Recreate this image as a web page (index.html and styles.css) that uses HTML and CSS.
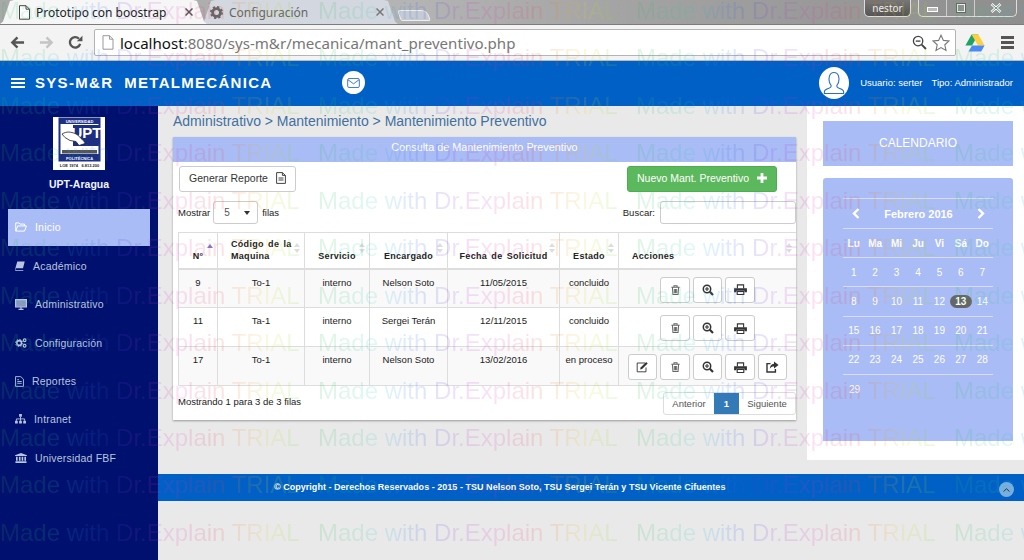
FILE: index.html
```html
<!DOCTYPE html>
<html lang="es">
<head>
    <meta charset="UTF-8">
    <title>Prototipo con boostrap</title>
    <link rel="stylesheet" href="styles.css">
</head>
<body>
    <svg class="sprites" width="0" height="0">
        <symbol id="i-trash" viewBox="0 0 12 12">
            <path d="M1.5 3h9M4.3 3V1.4h3.4V3M2.6 3l.6 8h5.6l.6-8M4.7 5v4.6M6 5v4.6M7.3 5v4.6" fill="none" stroke="currentColor" stroke-width="1.1"/>
        </symbol>
        <symbol id="i-zoom" viewBox="0 0 12 12">
            <circle cx="5" cy="5" r="3.7" fill="none" stroke="currentColor" stroke-width="1.5"/>
            <path d="M7.8 7.8l3.2 3.2" stroke="currentColor" stroke-width="2.2"/>
            <path d="M3 5h4M5 3v4" stroke="currentColor" stroke-width="1.1"/>
        </symbol>
        <symbol id="i-print" viewBox="0 0 14 12">
            <path d="M3.6 5V1h6.800v4" fill="none" stroke="currentColor" stroke-width="1.2"/>
            <path d="M0 4.600h14v4.400h-2.600V7.400H2.600V9H0z" fill="currentColor"/>
            <path d="M3.400 8.200h7.200v3.200H3.400z" fill="none" stroke="currentColor" stroke-width="1.200"/>
        </symbol>
        <symbol id="i-edit" viewBox="0 0 13 12">
            <path d="M9 2H1.200v8.800H10V6.500" fill="none" stroke="currentColor" stroke-width=".9"/>
            <path d="M4.600 6.600L10.200 1l1.500 1.500-5.600 5.600-2 .4z" fill="currentColor"/>
        </symbol>
        <symbol id="i-share" viewBox="0 0 13 12">
            <path d="M4.500 2.600H1v8.400h8.400V8" fill="none" stroke="currentColor" stroke-width="1.400"/>
            <path d="M8 .6L12.600 4 8 7.400V5.400C6 5.400 4.800 6 3.800 7.800 3.900 5 5.400 3 8 2.700z" fill="currentColor"/>
        </symbol>
    </svg>

    <div class="browser">
        <div class="tabstrip">
            <div class="tab tab-active">
                <svg class="tab-icon" viewBox="0 0 12 15"><path d="M1 .7h6.500L11 4.200v10H1zM7.500 .7v3.500H11" fill="#fff" stroke="#444" stroke-width="1"/></svg>
                <span class="tab-title">Prototipo con boostrap</span>
                <svg class="tab-close" viewBox="0 0 8 8"><path d="M.5 .5l7 7M7.500 .5l-7 7" stroke="#555" stroke-width="1.500"/></svg>
            </div>
            <div class="tab tab-other">
                <svg class="tab-icon" viewBox="0 0 14 14"><circle cx="7" cy="7" r="4.200" fill="none" stroke="#666" stroke-width="3"/><circle cx="7" cy="7" r="6" fill="none" stroke="#666" stroke-width="2" stroke-dasharray="2.400 2.300"/></svg>
                <span class="tab-title">Configuración</span>
                <svg class="tab-close" viewBox="0 0 8 8"><path d="M.5 .5l7 7M7.500 .5l-7 7" stroke="#777" stroke-width="1.500"/></svg>
            </div>
            <div class="tab-new"></div>
            <div class="window-user">nestor</div>
            <div class="window-buttons">
                <span class="win-btn"><i class="win-min"></i></span>
                <span class="win-btn"><i class="win-max"></i></span>
                <span class="win-btn win-close">
                    <svg viewBox="0 0 12 10" width="12" height="10"><path d="M1.500 1l9 8M10.500 1l-9 8" stroke="#fff" stroke-width="2.600"/><path d="M1.500 1l9 8M10.500 1l-9 8" stroke="#555" stroke-width=".7"/></svg>
                </span>
            </div>
        </div>
        <div class="toolbar">
            <svg class="nav-btn" viewBox="0 0 16 14"><path d="M15 7H3M8 1.500L2.500 7 8 12.500" fill="none" stroke="#555" stroke-width="2.600"/></svg>
            <svg class="nav-btn" viewBox="0 0 16 14"><path d="M1 7h12M8 1.500L13.500 7 8 12.500" fill="none" stroke="#c4c4c4" stroke-width="2.600"/></svg>
            <svg class="nav-btn" viewBox="0 0 16 16"><path d="M13 9.500A5.600 5.600 0 1 1 11.700 4" fill="none" stroke="#555" stroke-width="2.500"/><path d="M9.400 6.600h6V.8z" fill="#555"/></svg>
            <div class="omnibox">
                <svg class="omni-page" viewBox="0 0 12 15"><path d="M1 .7h6.500L11 4.200v10H1zM7.500 .7v3.500H11" fill="#fff" stroke="#999" stroke-width="1"/></svg>
                <span class="url"><b>localhost</b>:8080/sys-m&amp;r/mecanica/mant_preventivo.php</span>
                <svg class="omni-zoom" viewBox="0 0 16 16"><circle cx="6.500" cy="6.500" r="5" fill="none" stroke="#444" stroke-width="1.400"/><path d="M4 6.500h5" stroke="#444" stroke-width="1.400"/><path d="M10.300 10.300l4.600 4.600" stroke="#444" stroke-width="2"/></svg>
                <svg class="omni-star" viewBox="0 0 18 18"><path d="M9 1.200l2.400 5.200 5.600.6-4.200 3.800 1.200 5.600L9 13.600l-5 2.800 1.200-5.600L1 7l5.600-.6z" fill="#fff" stroke="#777" stroke-width="1.100"/></svg>
            </div>
            <svg class="drive" viewBox="0 0 20 18"><path d="M6.600 .5h6.800L7 11.600H.4z" fill="#1ea362"/><path d="M6.600 .5h6.800l6.200 11H13z" fill="#ffcf3f"/><path d="M3.600 17.500L7 11.600h12.600l-3.300 5.900z" fill="#4a8af4"/></svg>
            <div class="chrome-menu"><i></i><i></i><i></i></div>
        </div>
    </div>

    <header class="navbar">
        <div class="burger"><i></i><i></i><i></i></div>
        <div class="brand">SYS-M&amp;R&nbsp; METALMECÁNICA</div>
        <span class="mail">
            <svg viewBox="0 0 14 11" width="13" height="10"><rect x=".6" y=".6" width="12.800" height="9.800" rx="1.400" fill="none" stroke="#2a6fbf" stroke-width="1"/><path d="M1 2l6 4.400L13 2" fill="none" stroke="#2a6fbf" stroke-width="1"/></svg>
        </span>
        <div class="user">
            <span class="avatar">
                <svg viewBox="0 0 24 26" width="22" height="24"><path d="M1.500 24.500v-2c0-2 2-2.700 5-3.700 1.700-.6 2.500-1.200 2.500-2.400 0-1-1.500-2.400-2-4.400C6 8 6.500 1.500 12 1.500S18 8 17 12c-.5 2-2 3.400-2 4.400 0 1.200.8 1.800 2.500 2.400 3 1 5 1.700 5 3.700v2z" fill="none" stroke="#2a6fbf" stroke-width="1.200"/></svg>
            </span>
            <span>Usuario: serter</span>
            <span>Tipo: Administrador</span>
        </div>
    </header>

    <div class="layout">
        <nav class="sidebar">
            <div class="logo">
                <svg viewBox="0 0 52 53" width="52" height="53">
                    <rect width="52" height="53" fill="#fff"/>
                    <path d="M6.500 1.500h40v42h-40z" fill="#fff" stroke="#1c2f80" stroke-width="2"/>
                    <rect x="6.500" y="1.500" width="40" height="5.500" fill="#1c2f80"/>
                    <text x="26.500" y="6" class="logo-small" fill="#fff">UNIVERSIDAD</text>
                    <rect x="20" y="8" width="26" height="21" fill="#1c2f80"/>
                    <text x="33.500" y="21" class="logo-upt" fill="#fff">UPT</text>
                    <path d="M9 17c5-3 9-2 13-.5 3 1 4 3 6 5 2 2 4 3 4 5l-6 2-3-4-6-1-5-3z" fill="#fff" stroke="#222" stroke-width=".8"/>
                    <rect x="9" y="33" width="35" height="3.500" fill="#555"/>
                    <rect x="6.500" y="37" width="40" height="6.500" fill="#1c2f80"/>
                    <text x="26.500" y="42.500" class="logo-small" fill="#fff">POLITÉCNICA</text>
                    <text x="26.500" y="49.500" class="logo-small" fill="#222">LOE 1974 &#160; 6.813.200</text>
                </svg>
            </div>
            <div class="campus">UPT-Aragua</div>
            <a class="menu-item active" href="#">
                <svg width="12" height="10" viewBox="0 0 13 11"><path d="M.7 10V1h3.600l1 1.300h5v2M.7 10l2.200-5.700h9.600L10.300 10z" fill="none" stroke="currentColor" stroke-width="1.100"/></svg>
                Inicio
            </a>
            <a class="menu-item" href="#">
                <svg width="10" height="10" viewBox="0 0 11 11"><path d="M2.500 .5h8.200l-1.900 7.400H1.200L.4 9.200c0 .6.600.9 1.200.9h7.700l-.3.9H1.500C.6 11 0 10.200 .1 9z" fill="currentColor"/></svg>
                Académico
            </a>
            <a class="menu-item" href="#">
                <svg width="12" height="11" viewBox="0 0 12 11"><path d="M.6 .6h10.800v7.200H.6z" fill="none" stroke="currentColor" stroke-width="1.200"/><rect x="1" y="1" width="10" height="6.500" fill="currentColor" opacity=".75"/><path d="M3.500 10.400h5M6 8v2" stroke="currentColor" stroke-width="1.200"/></svg>
                Administrativo
            </a>
            <a class="menu-item" href="#">
                <svg width="12" height="10" viewBox="0 0 13 11"><circle cx="4.500" cy="5.500" r="2.600" fill="none" stroke="currentColor" stroke-width="1.700"/><circle cx="4.500" cy="5.500" r="4" fill="none" stroke="currentColor" stroke-width="1" stroke-dasharray="1.500 1.600"/><circle cx="10.500" cy="2.500" r="1.500" fill="none" stroke="currentColor" stroke-width="1.200"/><circle cx="10.500" cy="8.500" r="1.500" fill="none" stroke="currentColor" stroke-width="1.200"/></svg>
                Configuración
            </a>
            <a class="menu-item" href="#">
                <svg width="9" height="11" viewBox="0 0 10 12"><path d="M.6 .6h5.800L9.400 3.400v8H.6zM2.500 6h5M2.500 8h5M2.500 4h2" fill="none" stroke="currentColor" stroke-width="1"/></svg>
                Reportes
            </a>
            <a class="menu-item" href="#">
                <svg width="11" height="10" viewBox="0 0 12 11"><path d="M4.500 0h3v3h-3zM0 7.500h3v3H0zM4.500 7.500h3v3h-3zM9 7.500h3v3H9z" fill="currentColor"/><path d="M6 3v4.500M1.500 7.500V5.400h9v2.100" fill="none" stroke="currentColor" stroke-width="1"/></svg>
                Intranet
            </a>
            <a class="menu-item" href="#">
                <svg width="12" height="10" viewBox="0 0 13 11"><path d="M6.500 0L13 2.600v.8H0v-.8zM1 4.200h1.800v4.400H1zM4.200 4.200H6v4.400H4.200zM7.200 4.200H9v4.400H7.200zM10.200 4.200H12v4.400h-1.800zM.4 9.200h12.200V11H.4z" fill="currentColor"/></svg>
                Universidad FBF
            </a>
        </nav>

        <div class="content">
            <div class="content-top">
                <main class="main">
                    <div class="breadcrumb">Administrativo &gt; Mantenimiento &gt; Mantenimiento Preventivo</div>
                    <section class="card">
                        <div class="card-title">Consulta de Mantenimiento Preventivo</div>
                        <div class="card-actions">
                            <a class="btn btn-report" href="#">
                                Generar Reporte
                                <svg width="10" height="12" viewBox="0 0 10 12"><path d="M.6 .6h5.800L9.400 3.400v8H.6zM6.400 .6v2.800h3M2.500 6h5M2.500 8h5" fill="none" stroke="#444" stroke-width="1"/></svg>
                            </a>
                            <a class="btn btn-new" href="#">
                                Nuevo Mant. Preventivo
                                <svg width="10" height="10" viewBox="0 0 10 10"><path d="M5 0v10M0 5h10" stroke="#fff" stroke-width="2.800"/></svg>
                            </a>
                        </div>
                        <div class="table-tools">
                            <label class="length">
                                Mostrar
                                <span class="select">5<i></i></span>
                                filas
                            </label>
                            <label class="search">
                                Buscar:
                                <span class="search-input"></span>
                            </label>
                        </div>
                        <table class="grid">
                            <thead>
                                <tr>
                                    <th class="sort-asc">N°</th>
                                    <th>Código de la Maquina</th>
                                    <th>Servicio</th>
                                    <th>Encargado</th>
                                    <th>Fecha de Solicitud</th>
                                    <th>Estado</th>
                                    <th>Acciones</th>
                                </tr>
                            </thead>
                            <tbody>
                                <tr>
                                    <td>9</td><td>To-1</td><td>interno</td><td>Nelson Soto</td><td>11/05/2015</td><td>concluido</td>
                                    <td>
                                        <div class="actions">
                                            <button class="icon-btn icon-soft"><svg width="11" height="12"><use href="#i-trash"/></svg></button>
                                            <button class="icon-btn"><svg width="12" height="12"><use href="#i-zoom"/></svg></button>
                                            <button class="icon-btn"><svg width="13" height="11"><use href="#i-print"/></svg></button>
                                        </div>
                                    </td>
                                </tr>
                                <tr>
                                    <td>11</td><td>Ta-1</td><td>interno</td><td>Sergei Terán</td><td>12/11/2015</td><td>concluido</td>
                                    <td>
                                        <div class="actions">
                                            <button class="icon-btn icon-soft"><svg width="11" height="12"><use href="#i-trash"/></svg></button>
                                            <button class="icon-btn"><svg width="12" height="12"><use href="#i-zoom"/></svg></button>
                                            <button class="icon-btn"><svg width="13" height="11"><use href="#i-print"/></svg></button>
                                        </div>
                                    </td>
                                </tr>
                                <tr>
                                    <td>17</td><td>To-1</td><td>interno</td><td>Nelson Soto</td><td>13/02/2016</td><td>en proceso</td>
                                    <td>
                                        <div class="actions">
                                            <button class="icon-btn"><svg width="13" height="12"><use href="#i-edit"/></svg></button>
                                            <button class="icon-btn icon-soft"><svg width="11" height="12"><use href="#i-trash"/></svg></button>
                                            <button class="icon-btn"><svg width="12" height="12"><use href="#i-zoom"/></svg></button>
                                            <button class="icon-btn"><svg width="13" height="11"><use href="#i-print"/></svg></button>
                                            <button class="icon-btn"><svg width="13" height="12"><use href="#i-share"/></svg></button>
                                        </div>
                                    </td>
                                </tr>
                            </tbody>
                        </table>
                        <div class="table-foot">
                            <span class="info">Mostrando 1 para 3 de 3 filas</span>
                            <div class="pager">
                                <a href="#">Anterior</a>
                                <a class="current" href="#">1</a>
                                <a href="#">Siguiente</a>
                            </div>
                        </div>
                    </section>
                </main>

                <aside class="aside">
                    <div class="cal-title">CALENDARIO</div>
                    <div class="calendar">
                        <div class="cal-head">
                            <svg width="8" height="11" viewBox="0 0 8 11"><path d="M6.500 1L2 5.500 6.500 10" fill="none" stroke="#fff" stroke-width="2.400"/></svg>
                            <span>Febrero 2016</span>
                            <svg width="8" height="11" viewBox="0 0 8 11"><path d="M1.500 1L6 5.500 1.500 10" fill="none" stroke="#fff" stroke-width="2.400"/></svg>
                        </div>
                        <div class="cal-row cal-days"><span>Lu</span><span>Ma</span><span>Mi</span><span>Ju</span><span>Vi</span><span>Sá</span><span>Do</span></div>
                        <div class="cal-row"><span>1</span><span>2</span><span>3</span><span>4</span><span>5</span><span>6</span><span>7</span></div>
                        <div class="cal-row"><span>8</span><span>9</span><span>10</span><span>11</span><span>12</span><span class="today">13</span><span>14</span></div>
                        <div class="cal-row"><span>15</span><span>16</span><span>17</span><span>18</span><span>19</span><span>20</span><span>21</span></div>
                        <div class="cal-row"><span>22</span><span>23</span><span>24</span><span>25</span><span>26</span><span>27</span><span>28</span></div>
                        <div class="cal-row cal-last"><span>29</span></div>
                    </div>
                </aside>
            </div>

            <footer class="footer">
                © Copyright - Derechos Reservados - 2015 - TSU Nelson Soto, TSU Sergei Terán y TSU Vicente Cifuentes
                <span class="to-top">
                    <svg width="7" height="4" viewBox="0 0 7 4"><path d="M.5 3.500l3-2.700 3 2.700" fill="none" stroke="#234" stroke-width="1"/></svg>
                </span>
            </footer>
        </div>
    </div>

    <div class="watermark" id="watermark" aria-hidden="true"></div>
    <script src="watermark.js"></script>
</body>
</html>
```
FILE: styles.css
```css
* {
    box-sizing: border-box;
}

body {
    margin: 0;
    width: 1024px;
    height: 560px;
    overflow: hidden;
    position: relative;
    display: flex;
    flex-direction: column;
    background-color: #e9e9e9;
    font-family: "Liberation Sans", Arial, sans-serif;
    font-size: 10px;
    color: #222;
}

a {
    text-decoration: none;
    color: inherit;
}

.sprites {
    position: absolute;
}

/* browser window */
.browser {
    height: 61px;
    flex: none;
}

.tabstrip {
    height: 25px;
    display: flex;
    align-items: flex-end;
    background: linear-gradient(90deg, #a8a8a8, #b4b4b4 40%, #a4a4a4 60%, #8e8e8e);
    border-bottom: 1px solid #7c7c7c;
    font-family: "Noto Sans", sans-serif;
    font-size: 12px;
}

.tab {
    height: 24px;
    display: flex;
    align-items: center;
    position: relative;
}

.tab-active {
    width: 207px;
    padding: 0 14px 0 18px;
    background-color: #f6f6f6;
    clip-path: polygon(0 100%, 3px 90%, 10px 4%, 14px 0, 193px 0, 197px 4%, 204px 90%, 207px 100%);
    z-index: 2;
}

.tab-other {
    width: 197px;
    margin-left: -6px;
    padding: 0 14px 0 9px;
    background-color: #d3d7df;
    color: #666;
    clip-path: polygon(0 100%, 3px 90%, 10px 4%, 14px 0, 183px 0, 187px 4%, 194px 90%, 197px 100%);
}

.tab-icon {
    width: 13px;
    height: 15px;
    margin-right: 5px;
}

.tab-other .tab-icon {
    margin-right: 6px;
}

.tab-title {
    flex: 1;
    white-space: nowrap;
}

.tab-close {
    width: 8px;
    height: 8px;
}

.tab-new {
    width: 30px;
    height: 11px;
    margin: 0 0 3px 1px;
    background-color: #c6cad2;
    border: 1px solid #eee;
    border-radius: 3px 6px 2px 2px;
    transform: skewX(18deg);
}

.window-user {
    margin: 0 7px 7px auto;
    width: 47px;
    height: 17px;
    align-self: flex-start;
    border: 1px solid #ddd;
    border-top: none;
    border-radius: 0 0 5px 5px;
    background: linear-gradient(#777, #555);
    color: #eee;
    font-size: 10px;
    line-height: 16px;
    text-align: center;
}

.window-buttons {
    display: flex;
    align-self: flex-start;
    margin-right: 7px;
    height: 17px;
    border: 1px solid #ddd;
    border-top: none;
    border-radius: 0 0 5px 5px;
}

.win-btn {
    width: 28px;
    display: flex;
    align-items: center;
    justify-content: center;
    border-right: 1px solid #ccc;
}

.win-close {
    width: 41px;
    border-right: none;
}

.win-min {
    width: 11px;
    height: 5px;
    margin-top: 3px;
    background-color: #bbb;
    border: 1px solid #fff;
}

.win-max {
    width: 10px;
    height: 10px;
    border: 2px solid #eee;
    outline: 1px solid #666;
    outline-offset: -1px;
}

.toolbar {
    height: 36px;
    display: flex;
    align-items: center;
    padding: 0 10px;
    background-color: #f3f3f3;
    border-bottom: 1px solid #bbb;
}

.nav-btn {
    width: 15px;
    height: 15px;
    margin-right: 14px;
}

.omnibox {
    width: 864px;
    height: 27px;
    margin-left: -3px;
    display: flex;
    align-items: center;
    padding: 0 5px 0 7px;
    background-color: #fff;
    border: 1px solid #b4b4b4;
    border-radius: 2px;
}

.omni-page {
    width: 12px;
    height: 15px;
    margin-right: 6px;
}

.url {
    flex: 1;
    font-family: "Noto Sans", sans-serif;
    font-size: 15.080px;
    color: #777;
}

.url b {
    font-weight: normal;
    color: #111;
}

.omni-zoom {
    width: 15px;
    height: 15px;
    margin-right: 5px;
}

.omni-star {
    width: 18px;
    height: 18px;
}

.drive {
    width: 20px;
    height: 18px;
    margin-left: 9px;
}

.chrome-menu {
    margin-left: 16px;
    width: 13px;
    display: flex;
    flex-direction: column;
    gap: 2px;
}

.chrome-menu i {
    height: 3px;
    background-color: #555;
}

/* top navbar */
.navbar {
    height: 45px;
    flex: none;
    display: flex;
    align-items: center;
    padding: 0 11px 2px;
    background-color: #0060c6;
    color: #fff;
}

.burger {
    width: 14px;
    display: flex;
    flex-direction: column;
    gap: 2px;
}

.burger i {
    height: 2px;
    background-color: #fff;
}

.brand {
    margin-left: 10px;
    font-size: 15px;
    font-weight: bold;
    letter-spacing: 1.3px;
    white-space: nowrap;
}

.mail {
    width: 23px;
    height: 23px;
    margin-left: 70px;
    display: flex;
    align-items: center;
    justify-content: center;
    border-radius: 50%;
    background-color: #fff;
}

.user {
    margin-left: auto;
    display: flex;
    align-items: center;
    gap: 9px;
    font-size: 9.5px;
}

.avatar {
    width: 30px;
    height: 32px;
    margin-right: 2px;
    display: flex;
    align-items: center;
    justify-content: center;
    border-radius: 50%;
    background-color: #fff;
}

/* side menu */
.layout {
    flex: 1;
    display: flex;
    min-height: 0;
}

.sidebar {
    width: 158px;
    flex: none;
    padding: 11px 8px 0;
    background-color: #00106e;
    color: #b9c5de;
}

.logo {
    height: 53px;
    display: flex;
    justify-content: center;
    margin-right: 1px;
}

.logo-small {
    font-size: 4px;
    font-weight: bold;
    text-anchor: middle;
}

.logo-upt {
    font-size: 15px;
    font-weight: bold;
    text-anchor: middle;
}

.campus {
    margin: 8px 0 19px;
    text-align: center;
    font-size: 10.5px;
    font-weight: bold;
    line-height: 12px;
    color: #f2f4ff;
}

.menu-item {
    height: 38.300px;
    display: flex;
    align-items: center;
    gap: 8px;
    padding-left: 7px;
    font-size: 10.5px;
    letter-spacing: 0.2px;
}

.menu-item.active {
    height: 37px;
    margin-bottom: 1px;
    padding-bottom: 1px;
    background-color: #a9bcf5;
    color: #fff;
}

/* main area */
.content {
    flex: 1;
    display: flex;
    flex-direction: column;
    min-width: 0;
}

.content-top {
    height: 354px;
    display: flex;
}

.main {
    width: 649px;
    padding: 7px 0 0 15px;
}

.breadcrumb {
    height: 24px;
    font-size: 14px;
    line-height: 17px;
    color: #41709f;
}

.card {
    width: 623px;
    height: 283px;
    background-color: #fff;
    box-shadow: 0 1px 2px rgba(0, 0, 0, 0.35);
}

.card-title {
    height: 25px;
    background-color: #a9bcf5;
    color: #fff;
    font-size: 10.850px;
    line-height: 20px;
    text-align: center;
}

.card-actions {
    display: flex;
    justify-content: space-between;
    padding: 4px 19px 0 6px;
}

.btn {
    height: 26px;
    display: flex;
    align-items: center;
    justify-content: center;
    gap: 8px;
    padding-bottom: 2px;
    border-radius: 3px;
    font-size: 10.5px;
}

.btn-report {
    width: 117px;
    border: 1px solid #ccc;
    color: #333;
}

.btn-new {
    width: 150px;
    background-color: #5cb85c;
    border: 1px solid #4cae4c;
    color: #fff;
}

.table-tools {
    display: flex;
    justify-content: space-between;
    align-items: center;
    height: 23px;
    margin: 9px 0 8px 5px;
    font-size: 9.5px;
}

.length,
.search {
    display: flex;
    align-items: center;
    padding-bottom: 1px;
}

.select {
    width: 45px;
    height: 23px;
    margin: 0 4px 0 3px;
    position: relative;
    padding-left: 10px;
    border: 1px solid #ccc;
    border-radius: 3px;
    line-height: 22px;
    font-size: 10px;
    color: #555;
}

.select i {
    position: absolute;
    right: 7px;
    top: 9px;
    border: 3px solid transparent;
    border-top: 4px solid #333;
    border-bottom: none;
}

.search-input {
    width: 136px;
    height: 23px;
    margin-left: 5px;
    border: 1px solid #ccc;
    border-radius: 3px;
}

.grid {
    width: 618px;
    margin-left: 5px;
    table-layout: fixed;
    border-collapse: collapse;
    font-size: 9.5px;
    border-top: 1px solid #ddd;
    border-left: 1px solid #ddd;
}

.grid th {
    position: relative;
    height: 36px;
    padding: 0 0 6px;
    border: 1px solid #ddd;
    border-bottom-width: 2px;
    border-top: none;
    vertical-align: bottom;
    font-size: 9px;
    letter-spacing: 0.3px;
    word-spacing: 1.5px;
    line-height: 12px;
}

.grid th::after {
    content: "";
    position: absolute;
    right: 4px;
    top: 10px;
    border: 3px solid transparent;
    border-top: none;
    border-bottom: 4px solid #ddd;
}

.grid th::before {
    content: "";
    position: absolute;
    right: 4px;
    top: 16px;
    border: 3px solid transparent;
    border-bottom: none;
    border-top: 4px solid #ddd;
}

.grid th.sort-asc::after {
    top: 11px;
    border-bottom-color: #7b7bd0;
}

.grid th.sort-asc::before {
    display: none;
}

.grid th:nth-child(1) { width: 39px; }
.grid th:nth-child(2) { width: 87px; padding-left: 13px; padding-right: 6px; text-align: left; }
.grid th:nth-child(3) { width: 65px; }
.grid th:nth-child(4) { width: 78px; }
.grid th:nth-child(5) { width: 112px; }
.grid th:nth-child(6) { width: 59px; }
.grid th:nth-child(7) { padding-left: 13px; text-align: left; }

.grid td {
    height: 39px;
    padding: 7px 0 0;
    border: 1px solid #ddd;
    vertical-align: top;
    text-align: center;
    line-height: 12px;
}

.grid th:last-child,
.grid td:last-child {
    border-right: none;
}

.grid tbody tr:nth-child(odd) {
    background-color: #f9f9f9;
}

.actions {
    display: flex;
    justify-content: center;
    gap: 3px;
}

.icon-btn {
    width: 29.500px;
    height: 26px;
    padding: 0;
    display: flex;
    align-items: center;
    justify-content: center;
    background-color: #fff;
    border: 1px solid #ccc;
    border-radius: 3px;
    color: #333;
}

.icon-soft {
    color: #666;
}

.table-foot {
    display: flex;
    justify-content: space-between;
    padding: 6px 0 0 5px;
}

.info {
    padding-top: 4px;
    font-size: 9.5px;
    line-height: 11px;
}

.pager {
    display: flex;
    height: 23px;
    border: 1px solid #ddd;
    border-radius: 3px;
    font-size: 9.5px;
    line-height: 22px;
    color: #555;
}

.pager a {
    padding: 0 8px;
}

.pager a:first-child {
    width: 50px;
    padding: 0;
    text-align: center;
}

.pager a:last-child {
    width: 56px;
    padding: 0;
    text-align: center;
}

.pager .current {
    width: 25px;
    padding: 0;
    background-color: #337ab7;
    color: #fff;
    font-weight: bold;
    text-align: center;
}

/* calendar column */
.aside {
    width: 217px;
    padding: 15px 11px 0 16px;
    background-color: #fff;
}

.cal-title {
    height: 45px;
    background-color: #a9bcf5;
    color: #fff;
    font-size: 12px;
    line-height: 45px;
    text-align: center;
}

.calendar {
    height: 263px;
    margin-top: 12px;
    padding: 20px 20px 0;
    background-color: #a9bcf5;
    border-radius: 3px 3px 0 0;
    color: #fff;
}

.cal-head {
    height: 30px;
    display: flex;
    align-items: center;
    justify-content: space-between;
    padding: 0 8px 0 9px;
    border-top: 1px solid #d8dcec;
    font-size: 11px;
    font-weight: bold;
}

.cal-row {
    height: 29.200px;
    display: grid;
    grid-template-columns: repeat(7, 1fr);
    align-items: center;
    border-top: 1px solid #d8dcec;
    text-align: center;
    font-size: 10px;
    font-weight: 500;
}

.cal-days {
    font-weight: bold;
}

.cal-last {
    text-align: left;
}

.cal-last span {
    width: 21px;
    text-align: center;
    padding-left: 2px;
}

.today {
    background-color: #666;
    border-radius: 7px;
    line-height: 13px;
    font-weight: bold;
}

/* footer */
.footer {
    height: 27px;
    margin-top: 14px;
    position: relative;
    padding-left: 116px;
    background-color: #0060c6;
    color: #fff;
    font-size: 9px;
    font-weight: bold;
    line-height: 27px;
    letter-spacing: 0.03px;
    white-space: nowrap;
}

.to-top {
    position: absolute;
    right: 10px;
    top: 8px;
    width: 15px;
    height: 15px;
    display: flex;
    align-items: center;
    justify-content: center;
    border-radius: 50%;
    background-color: #7aaee0;
}

/* trial stamp over the whole screenshot */
.watermark {
    position: absolute;
    left: 0;
    top: -4px;
    width: 1024px;
    height: 564px;
    overflow: hidden;
    display: grid;
    grid-template-columns: repeat(4, 318px);
    grid-auto-rows: 47.450px;
    pointer-events: none;
    z-index: 10;
}

.stamp {
    width: 300px;
    height: 30px;
    font-size: 24px;
    line-height: 30px;
    white-space: nowrap;
    background-image: linear-gradient(90deg, #22c050 0%, #22cc99 15%, #22cccc 20%, #2288ee 28%, #3344dd 38%, #9933dd 46%, #dd33bb 58%, #ee3344 72%, #ee8822 80%, #dddd22 90%, #66dd22 100%);
    -webkit-background-clip: text;
    background-clip: text;
    color: transparent;
    opacity: 0.14;
}
```
FILE: watermark.js
```js
// fills the overlay with the repeated trial text
var box = document.getElementById('watermark');

for (var i = 0; i < 48; i++) {
    var stamp = document.createElement('div');
    stamp.className = 'stamp';
    stamp.textContent = 'Made with Dr.Explain TRIAL';
    box.appendChild(stamp);
}
```
